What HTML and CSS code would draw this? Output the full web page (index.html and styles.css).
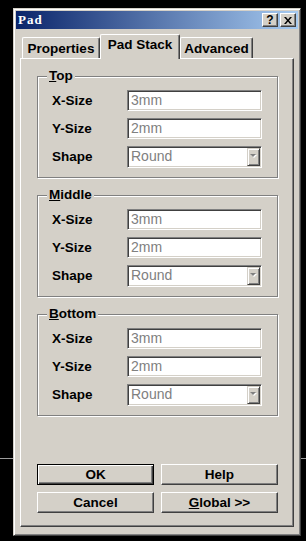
FILE: index.html
```html
<!DOCTYPE html>
<html lang="en">
<head>
  <meta charset="UTF-8">
  <title>Pad</title>
  <link rel="stylesheet" href="styles.css">
</head>
<body>
  <div class="dialog">
    <div class="titlebar">
      <span class="title">Pad</span>
      <span class="tbtn help">?</span>
      <span class="tbtn close">
        <svg width="8" height="7" viewBox="0 0 8 7"><path d="M0 0h2l2 2.5L6 0h2L5 3.5 8 7H6L4 4.5 2 7H0l3-3.5z" fill="#000"/></svg>
      </span>
    </div>

    <div class="tabs">
      <div class="tab tab-props">Properties</div>
      <div class="tab tab-stack active">Pad Stack</div>
      <div class="tab tab-adv">Advanced</div>
    </div>

    <div class="panel">
      <div class="group">
        <div class="group-label"><u>T</u>op</div>
        <div class="rows">
          <div class="row"><span class="lbl">X-Size</span><div class="field">3mm</div></div>
          <div class="row"><span class="lbl">Y-Size</span><div class="field">2mm</div></div>
          <div class="row"><span class="lbl">Shape</span><div class="field select"><span class="val">Round</span><span class="arrow"><svg width="7" height="5" viewBox="0 0 7 5"><path d="M1 1h6L4 4z" fill="#fff"/><path d="M0 0h6L3 3z" fill="#808080"/></svg></span></div></div>
        </div>
      </div>

      <div class="group">
        <div class="group-label"><u>M</u>iddle</div>
        <div class="rows">
          <div class="row"><span class="lbl">X-Size</span><div class="field">3mm</div></div>
          <div class="row"><span class="lbl">Y-Size</span><div class="field">2mm</div></div>
          <div class="row"><span class="lbl">Shape</span><div class="field select"><span class="val">Round</span><span class="arrow"><svg width="7" height="5" viewBox="0 0 7 5"><path d="M1 1h6L4 4z" fill="#fff"/><path d="M0 0h6L3 3z" fill="#808080"/></svg></span></div></div>
        </div>
      </div>

      <div class="group">
        <div class="group-label"><u>B</u>ottom</div>
        <div class="rows">
          <div class="row"><span class="lbl">X-Size</span><div class="field">3mm</div></div>
          <div class="row"><span class="lbl">Y-Size</span><div class="field">2mm</div></div>
          <div class="row"><span class="lbl">Shape</span><div class="field select"><span class="val">Round</span><span class="arrow"><svg width="7" height="5" viewBox="0 0 7 5"><path d="M1 1h6L4 4z" fill="#fff"/><path d="M0 0h6L3 3z" fill="#808080"/></svg></span></div></div>
        </div>
      </div>

      <div class="buttons">
        <div class="btn default">OK</div>
        <div class="btn">Help</div>
        <div class="btn">Cancel</div>
        <div class="btn"><u>G</u>lobal &gt;&gt;</div>
      </div>
    </div>
  </div>
</body>
</html>
```

FILE: styles.css
```css
html {
  background: #000;
}
body {
  margin: 0;
  height: 541px;
  padding: 8px 0 0 13px;
  box-sizing: border-box;
  background: linear-gradient(to bottom, #000 458px, #9c9c9c 458px, #9c9c9c 459px, #000 459px);
  font-family: "Liberation Sans", Arial, sans-serif;
}

.dialog {
  width: 288px;
  height: 528px;
  box-sizing: border-box;
  background: #d4d0c8;
  border: 1px solid;
  border-color: #d4d0c8 #404040 #404040 #d4d0c8;
  box-shadow: inset 1px 1px #fff, inset -1px -1px #808080;
  padding: 2px;
  display: flex;
  flex-direction: column;
}

.titlebar {
  height: 18px;
  display: flex;
  align-items: center;
  gap: 2px;
  padding: 0 2px 0 2px;
  background: linear-gradient(to right, #0a246a, #a6caf0);
}
.title {
  flex: 1;
  color: #fff;
  font-family: "Liberation Serif", serif;
  font-weight: bold;
  font-size: 13px;
  letter-spacing: 1px;
}
.tbtn {
  width: 16px;
  height: 14px;
  box-sizing: border-box;
  background: #d4d0c8;
  border: 1px solid;
  border-color: #fff #404040 #404040 #fff;
  box-shadow: inset -1px -1px #808080;
  display: flex;
  align-items: center;
  justify-content: center;
  font-weight: bold;
  font-size: 12px;
  line-height: 12px;
  color: #000;
}

.tabs {
  display: flex;
  align-items: flex-end;
  height: 24px;
  margin: 5px 4px 0 6px;
  position: relative;
  z-index: 1;
}
.tab {
  height: 21px;
  box-sizing: border-box;
  border-top: 1px solid #fff;
  border-left: 1px solid #fff;
  border-right: 1px solid #404040;
  box-shadow: inset -1px 0 #808080;
  border-radius: 2px 2px 0 0;
  background: #d4d0c8;
  font-weight: bold;
  font-size: 13.5px;
  line-height: 21px;
  text-align: center;
  color: #000;
}
.tab-props { width: 78px; }
.tab-stack { width: 80px; }
.tab-adv { width: 73px; }
.tab.active {
  height: 25px;
  margin-bottom: -1px;
  line-height: 20px;
}

.panel {
  flex: 1;
  margin: 0 4px 6px 4px;
  border: 1px solid;
  border-color: #fff #404040 #404040 #fff;
  box-shadow: inset -1px -1px #808080;
  padding: 17px 15px 13px 16px;
  display: flex;
  flex-direction: column;
}

.group {
  border: 1px solid #808080;
  box-shadow: inset 1px 1px #fff, 1px 1px #fff;
  padding: 0 15px 10px 14px;
  margin-bottom: 17px;
}
.group-label {
  width: fit-content;
  margin: -8px 0 0 -5px;
  padding: 0 2px;
  background: #d4d0c8;
  font-weight: bold;
  font-size: 13.5px;
  line-height: 14px;
  position: relative;
}
.rows {
  margin-top: 7px;
  display: flex;
  flex-direction: column;
  gap: 7px;
}
.row {
  display: flex;
  align-items: center;
  height: 21px;
}
.lbl {
  width: 75px;
  font-weight: bold;
  font-size: 13.5px;
  color: #000;
}
.field {
  width: 135px;
  height: 21px;
  box-sizing: border-box;
  background: #fff;
  border: 1px solid;
  border-color: #808080 #fff #fff #808080;
  box-shadow: inset 1px 1px #404040, inset -1px -1px #d4d0c8;
  padding-left: 3px;
  color: #808080;
  font-size: 14px;
  line-height: 19px;
}
.select {
  height: 22px;
  display: flex;
  align-items: center;
  padding: 1px;
  padding-left: 3px;
}
.select .val {
  flex: 1;
}
.arrow {
  width: 13px;
  height: 18px;
  box-sizing: border-box;
  background: #d4d0c8;
  border: 1px solid;
  border-color: #d4d0c8 #404040 #404040 #d4d0c8;
  box-shadow: inset 1px 1px #fff, inset -1px -1px #808080;
  display: flex;
  align-items: center;
  justify-content: center;
}

.buttons {
  margin-top: auto;
  display: grid;
  grid-template-columns: 117px 117px;
  gap: 7px;
}
.btn {
  height: 21px;
  box-sizing: border-box;
  border: 1px solid;
  border-color: #fff #404040 #404040 #fff;
  box-shadow: inset -1px -1px #808080;
  font-weight: bold;
  font-size: 13.5px;
  line-height: 19px;
  text-align: center;
  color: #000;
}
.btn.default {
  border-color: #000;
  box-shadow: inset 1px 1px #fff, inset -1px -1px #404040, inset -2px -2px #808080;
}
```
